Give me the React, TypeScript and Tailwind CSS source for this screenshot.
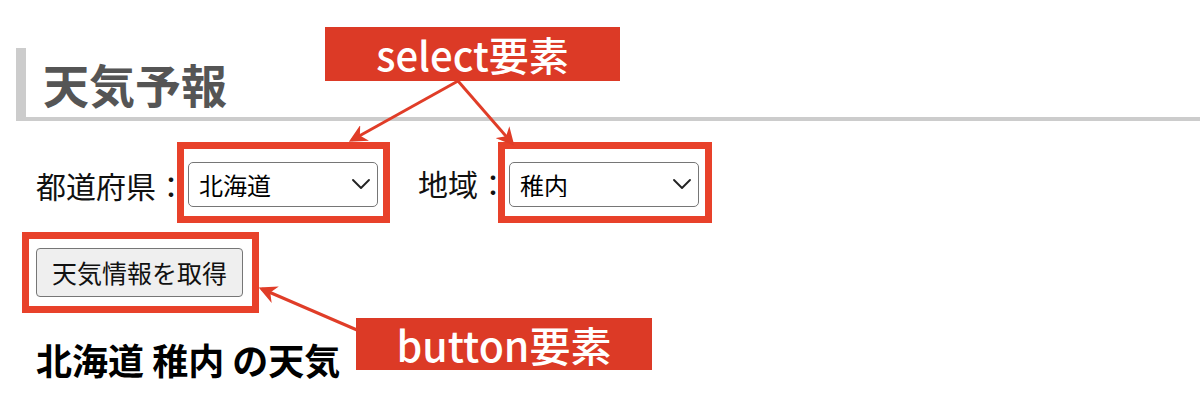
import { ChevronDown } from "lucide-react";

const jp = "font-['Noto_Sans_CJK_JP','Noto_Sans',sans-serif]";

// red frame drawn around the element it annotates
const Frame = ({ className }: { className: string }) => (
  <div
    className={`pointer-events-none absolute border-[7px] border-[#e8412a] ${className}`}
  />
);

const FakeSelect = ({ value }: { value: string }) => (
  <div className="relative">
    <select
      defaultValue={value}
      className="h-[45px] w-[190px] appearance-none rounded-[5px] border border-[#767676] bg-white pl-[10px] text-[24px] leading-none text-black outline-none"
    >
      <option>{value}</option>
    </select>
    <ChevronDown
      className="pointer-events-none absolute right-px top-[6px] h-[32px] w-[32px] text-[#222]"
      strokeWidth={1.4}
    />
  </div>
);

const Label = ({ text }: { text: string }) => (
  <span className="text-[30px] leading-none text-[#111]">{text}</span>
);

export default function App() {
  return (
    <div className={`relative h-[415px] w-[1200px] overflow-hidden bg-white ${jp}`}>
      {/* page */}
      <div className="pl-4 pt-12">
        <h1 className="flex h-[73px] items-center border-b-4 border-l-[10px] border-[#cccccc] pl-[17px] text-[46px] font-bold leading-none text-[#555555]">
          天気予報
        </h1>
      </div>

      <div className="pl-9">
        <div className="mt-[41px] flex items-center">
          <Label text="都道府県：" />
          <div className="relative ml-[2px]">
            <FakeSelect value="北海道" />
            <Frame className="-bottom-[16px] -left-[11px] -right-[12px] -top-[20px]" />
          </div>
          <div className="ml-[40px]">
            <Label text="地域：" />
          </div>
          <div className="relative ml-[1px]">
            <FakeSelect value="稚内" />
            <Frame className="-bottom-[16px] -left-[11px] -right-[13px] -top-[20px]" />
          </div>
        </div>

        <div className="relative mt-[41px] w-[207px]">
          <button className="h-[49px] w-[207px] rounded-[4px] border border-[#767676] bg-[#efefef] text-[25px] leading-none text-[#111]">
            天気情報を取得
          </button>
          <Frame className="-bottom-[16px] -left-[14px] -right-[16px] -top-[16px]" />
        </div>

        <h2 className="mt-[44px] text-[36px] font-bold leading-none text-black">
          北海道 稚内 の天気
        </h2>
      </div>

      {/* annotations */}
      <div className="absolute left-[325px] top-[27px] flex h-[54px] w-[295px] items-center justify-center bg-[#dc3a26] text-[40px] font-medium leading-none text-white">
        select要素
      </div>
      <div className="absolute left-[356px] top-[318px] flex h-[52px] w-[296px] items-center justify-center bg-[#dc3a26] text-[41px] font-medium leading-none text-white">
        button要素
      </div>

      <svg
        className="pointer-events-none absolute left-0 top-0"
        width="1200"
        height="415"
      >
        <defs>
          <marker
            id="head"
            viewBox="0 0 10 10"
            refX="8"
            refY="5"
            markerWidth="6"
            markerHeight="6"
            orient="auto-start-reverse"
          >
            <path d="M0 0 L10 5 L0 10 L3 5 Z" fill="#e03d28" />
          </marker>
        </defs>
        <g stroke="#e03d28" strokeWidth="3" fill="none">
          <line x1="458" y1="81" x2="352" y2="140" markerEnd="url(#head)" />
          <line x1="458" y1="81" x2="512" y2="143" markerEnd="url(#head)" />
          <line x1="357" y1="330" x2="262" y2="289" markerEnd="url(#head)" />
        </g>
      </svg>
    </div>
  );
}
